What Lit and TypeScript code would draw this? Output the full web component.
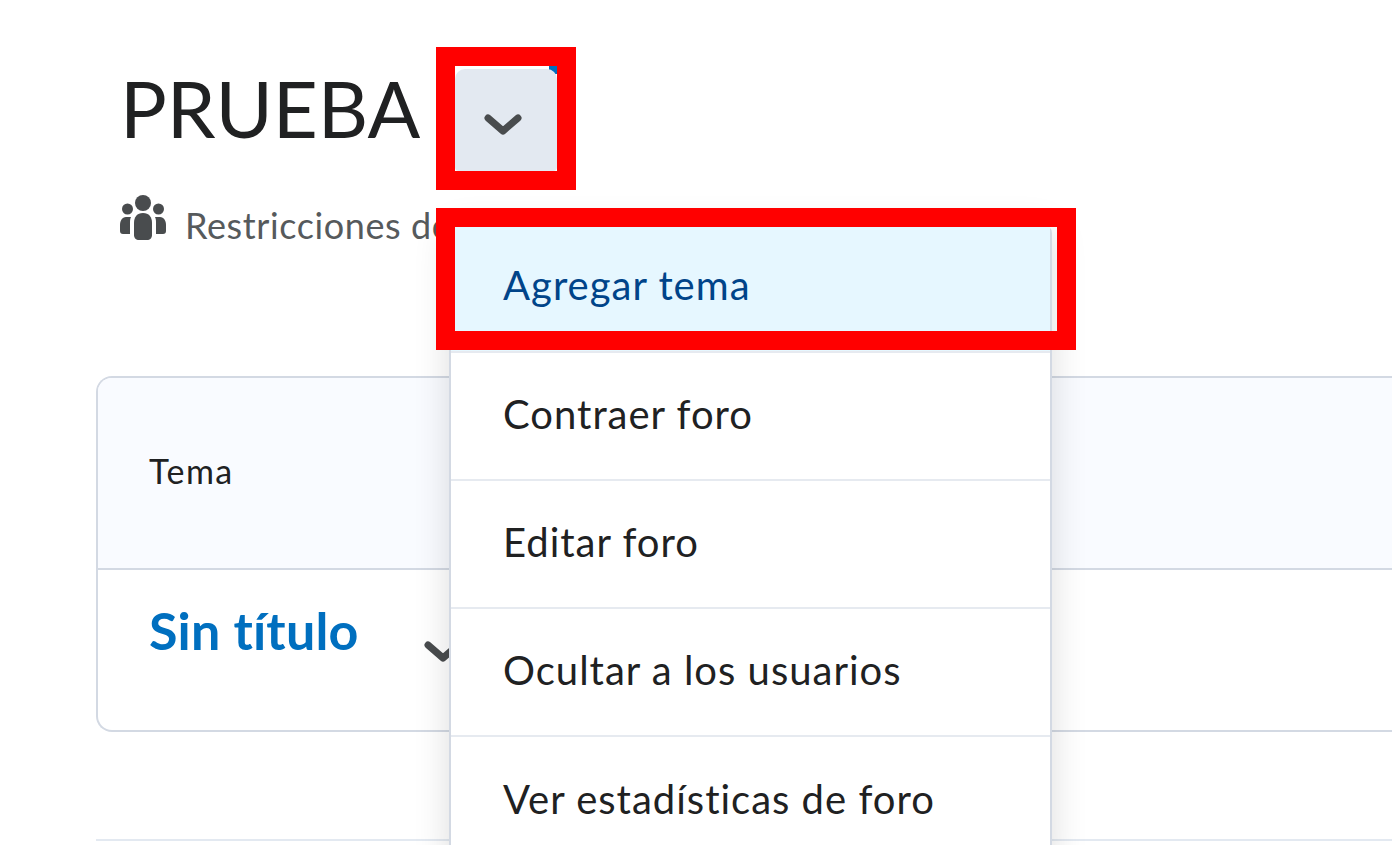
import { LitElement, html, css } from 'lit'
import { customElement } from 'lit/decorators.js'

const chevron = html`<svg viewBox="0 0 38 24" width="38" height="24" fill="none">
  <path d="M4 5 L19 18 L34 5" stroke="#494c4e" stroke-width="7" stroke-linecap="round" stroke-linejoin="round" />
</svg>`

const people = html`<svg viewBox="0 0 48 48" width="48" height="48" fill="#494c4e">
  <circle cx="24" cy="9" r="8" />
  <circle cx="8.5" cy="15" r="5.5" />
  <circle cx="39.5" cy="15" r="5.5" />
  <path d="M24 19c6 0 9 4 9 10v12c0 3-2 5-5 5h-8c-3 0-5-2-5-5V29c0-6 3-10 9-10z" />
  <path d="M7 23h5c-1 2-1 4-1 6v11H4c-2 0-3-1-3-3v-6c0-4 2-8 6-8z" />
  <path d="M41 23h-5c1 2 1 4 1 6v11h7c2 0 3-1 3-3v-6c0-4-2-8-6-8z" />
</svg>`

const menuItems = ['Agregar tema', 'Contraer foro', 'Editar foro', 'Ocultar a los usuarios', 'Ver estadísticas de foro']

@customElement('app-root')
export class AppRoot extends LitElement {
  static styles = css`
    :host {
      display: block;
      position: relative;
      height: 845px;
      overflow: hidden;
      background: #fff;
      font-family: Lato, 'Open Sans', sans-serif;
      color: #202122;
      font-variant-ligatures: none;
    }
    .page {
      padding: 66px 0 0 96px;
    }
    .title-row {
      display: flex;
      align-items: flex-start;
      padding-left: 24px;
      height: 105px;
    }
    h1 {
      margin: 0;
      font-size: 78px;
      font-weight: 400;
      line-height: 84px;
      width: 335px;
    }
    .toggle-wrap {
      width: 102px;
      height: 105px;
      box-sizing: border-box;
      padding-top: 3px;
      background: linear-gradient(#006fbf, #006fbf) no-repeat top right / 8px 8px;
    }
    .toggle {
      height: 100%;
      border-radius: 10px 10px 4px 4px;
      background: #e3e9f1;
      display: flex;
      align-items: center;
      justify-content: center;
    }
    .toggle svg {
      margin: 10px 6px 0 0;
    }
    .restrictions {
      display: flex;
      align-items: center;
      gap: 18px;
      margin-top: 24px;
      padding-left: 23px;
      font-size: 36px;
      letter-spacing: 0.6px;
      color: #565a5c;
      height: 52px;
    }
    .restrictions svg {
      margin-top: -6px;
    }
    .restrictions span {
      margin-top: 8px;
    }
    .table {
      margin-top: 129px;
      border: 2px solid #d3d9e3;
      border-right: none;
      border-radius: 16px 0 0 16px;
      height: 356px;
      box-sizing: border-box;
      display: flex;
      flex-direction: column;
    }
    .table-head {
      height: 192px;
      box-sizing: border-box;
      background: #f9fbff;
      border-bottom: 2px solid #d3d9e3;
      border-radius: 14px 0 0 0;
      padding: 0 0 6px 51px;
      display: flex;
      align-items: center;
      font-size: 34px;
      letter-spacing: 1.5px;
    }
    .table-row {
      display: flex;
      align-items: flex-start;
      padding: 30px 0 0 51px;
    }
    .topic {
      font-size: 52px;
      font-weight: 700;
      color: #006fbf;
      line-height: 60px;
      letter-spacing: 0.2px;
      width: 275px;
    }
    .topic-chevron {
      margin-top: 40px;
    }
    .rule {
      margin-top: 107px;
      height: 2px;
      background: #e3e9f1;
    }
    .menu {
      position: absolute;
      left: 449px;
      top: 225px;
      width: 603px;
      box-sizing: border-box;
      background: #fff;
      border: 2px solid #d3d9e3;
      border-radius: 8px 8px 0 0;
      box-shadow: 0 4px 36px rgba(0, 0, 0, 0.14);
    }
    .menu-item {
      height: 128px;
      box-sizing: border-box;
      border-bottom: 2px solid #e6eaf0;
      padding: 0 0 5px 52px;
      display: flex;
      align-items: center;
      font-size: 40px;
      letter-spacing: 1px;
    }
    .menu-item.active {
      background: #e6f7ff;
      color: #004489;
      height: 126px;
      padding-bottom: 8px;
    }
    .menu-item:last-child {
      border-bottom: none;
    }
    .mark {
      position: absolute;
      box-sizing: border-box;
      border: 19px solid #ff0000;
    }
    .mark-toggle {
      left: 436px;
      top: 47px;
      width: 140px;
      height: 143px;
    }
    .mark-item {
      left: 436px;
      top: 208px;
      width: 640px;
      height: 142px;
    }
  `

  render() {
    return html`
      <div class="page">
        <div class="title-row">
          <h1>PRUEBA</h1>
          <div class="toggle-wrap"><div class="toggle">${chevron}</div></div>
        </div>
        <div class="restrictions">${people}<span>Restricciones de acceso</span></div>
        <div class="table">
          <div class="table-head">Tema</div>
          <div class="table-row">
            <div class="topic">Sin título</div>
            <div class="topic-chevron">${chevron}</div>
          </div>
        </div>
        <div class="rule"></div>
      </div>
      <div class="menu">
        ${menuItems.map(
          (item, i) => html`<div class="menu-item ${i === 0 ? 'active' : ''}">${item}</div>`
        )}
      </div>
      <div class="mark mark-toggle"></div>
      <div class="mark mark-item"></div>
    `
  }
}
